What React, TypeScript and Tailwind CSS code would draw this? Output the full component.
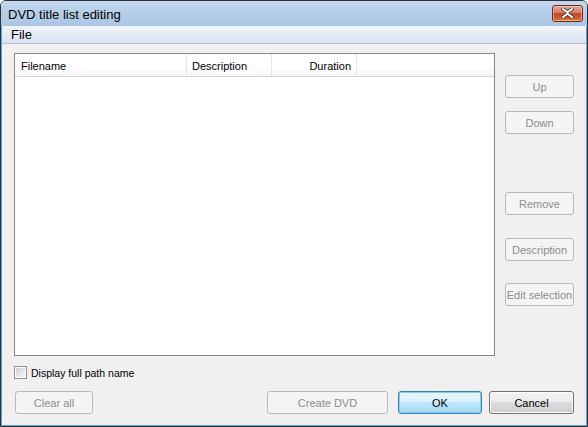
import React from "react";

function Btn({ label, w, disabled = true, variant = "normal", className = "" }: { label: string; w: number; disabled?: boolean; variant?: "normal" | "default"; className?: string }) {
  let cls = "";
  if (disabled) {
    cls = "border-[#b6babd] bg-[#f4f4f4] text-[#8d8d8d]";
  } else if (variant === "default") {
    cls = "border-[#3c7fb1] bg-[linear-gradient(to_bottom,#eaf6fd_0%,#d9f0fc_45%,#bee6fd_50%,#a7d9f5_100%)] text-black shadow-[inset_0_0_0_1px_#7fd0f5]";
  } else {
    cls = "border-[#707070] bg-[linear-gradient(to_bottom,#f2f2f2_0%,#ebebeb_45%,#dddddd_50%,#cfcfcf_100%)] text-black shadow-[inset_0_0_0_1px_#fcfcfc]";
  }
  return (
    <div
      className={`h-[23px] flex items-center justify-center pt-[1px] rounded-[3px] border text-[11px] leading-none ${cls} ${className}`}
      style={{ width: w }}
    >
      {label}
    </div>
  );
}

export default function App() {
  return (
    <div className="w-[588px] h-[427px] font-['Liberation_Sans',Arial,sans-serif] text-black">
      <div className="w-full h-full flex flex-col border border-[#2c3036] rounded-t-[6px] overflow-hidden">
        {/* Title bar */}
        <div className="h-[25px] shrink-0 flex items-center justify-between pl-[7px] pr-[4px] bg-[linear-gradient(to_bottom,#c3d8ee_0%,#b7cfe9_40%,#abc6e4_100%)]">
          <span className="text-[13px] text-black leading-none mt-[1px]">DVD title list editing</span>
          <div className="w-[31px] h-[17px] mt-[-1px] rounded-[3px] border border-[#6b2a26] bg-[linear-gradient(to_bottom,#e8a795_0%,#d97b63_45%,#c4452c_50%,#cd5a2f_80%,#e0862f_100%)] flex items-center justify-center shadow-[inset_0_0_0_1px_rgba(255,220,210,0.5)]">
            <svg width="13" height="10" viewBox="0 0 13 10">
              <path d="M2 1 L6.5 4.3 L11 1 M2 9 L6.5 5.7 L11 9" stroke="#4a3030" strokeWidth="3.6" fill="none" strokeLinecap="square" />
              <path d="M2 1 L6.5 4.3 L11 1 M2 9 L6.5 5.7 L11 9" stroke="#ffffff" strokeWidth="2" fill="none" strokeLinecap="square" />
            </svg>
          </div>
        </div>
        {/* Frame body */}
        <div className="flex-1 flex flex-col border-l border-r border-b border-[#59a8dc]">
          {/* Menu bar */}
          <div className="h-[18px] shrink-0 flex items-center pl-[9px] bg-[linear-gradient(to_bottom,#f1f4fb_0%,#e6ebf6_50%,#dbe2f1_100%)] border-b border-[#b9c1d6]">
            <span className="text-[13px] leading-none">File</span>
          </div>
          {/* Client */}
          <div className="flex-1 bg-[#f0f0f0] flex flex-col pl-[12px]">
            <div className="flex mt-[9px]">
              {/* List */}
              <div className="w-[481px] h-[303px] border border-[#828790] bg-white flex flex-col">
                <div className="h-[23px] flex border-b border-[#d5d5d5] bg-[linear-gradient(to_bottom,#ffffff_0%,#ffffff_60%,#f4f5f6_100%)] text-[11px]">
                  <div className="w-[172px] flex items-center pt-[2px] pl-[6px] border-r border-[#e3e5e7]">Filename</div>
                  <div className="w-[85px] flex items-center pt-[2px] pl-[5px] border-r border-[#e3e5e7]">Description</div>
                  <div className="w-[85px] flex items-center pt-[2px] justify-end pr-[5px] border-r border-[#e3e5e7]">Duration</div>
                </div>
              </div>
              {/* Right buttons */}
              <div className="flex flex-col ml-[10px] pt-[22px]">
                <Btn label="Up" w={69} />
                <Btn label="Down" w={69} className="mt-[13px]" />
                <Btn label="Remove" w={69} className="mt-[58px]" />
                <Btn label="Description" w={69} className="mt-[23px]" />
                <Btn label="Edit selection" w={69} className="mt-[22px]" />
              </div>
            </div>
            {/* Checkbox row */}
            <div className="flex items-center mt-[10px] h-[13px]">
              <div className="w-[13px] h-[13px] border border-[#8f8f8f] bg-white p-[1px]">
                <div className="w-full h-full bg-[linear-gradient(135deg,#cfcfcf_0%,#e9e9e9_60%,#f4f4f4_100%)]" />
              </div>
              <span className="ml-[4px] text-[10.5px] leading-none pt-[1px]">Display full path name</span>
            </div>
            {/* Bottom buttons */}
            <div className="flex mt-[12px]">
              <Btn label="Clear all" w={78} className="ml-[1px]" />
              <Btn label="Create DVD" w={121} className="ml-[174px]" />
              <Btn label="OK" w={84} disabled={false} variant="default" className="ml-[10px]" />
              <Btn label="Cancel" w={85} disabled={false} className="ml-[7px]" />
            </div>
          </div>
        </div>
      </div>
    </div>
  );
}
